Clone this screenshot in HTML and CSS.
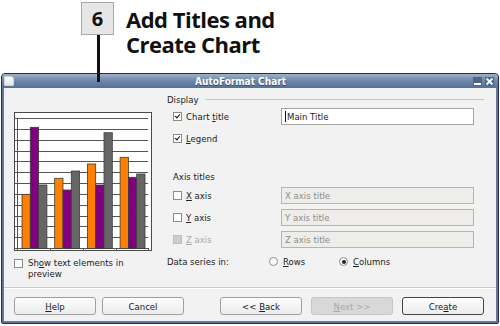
FILE: index.html
```html
<!DOCTYPE html>
<html lang="en">
<head>
    <meta charset="UTF-8">
    <meta name="viewport" content="width=device-width, initial-scale=1.0">
    <title>AutoFormat Chart</title>
    <link rel="stylesheet" href="styles.css">
</head>
<body>
    <!-- Step callout -->
    <div class="step">
        <div class="callout"><span>6</span></div>
        <h1 class="step-title"><span>Add Titles and</span><span>Create Chart</span></h1>
    </div>

    <!-- Dialog window -->
    <div class="window">
        <div class="titlebar">
            <span class="win-icon"></span>
            <span class="win-title">AutoFormat Chart</span>
            <span class="win-btn">
                <svg width="9" height="9" viewBox="0 0 9 9"><rect x="1" y="6" width="7" height="2" fill="#fff"/></svg>
            </span>
            <span class="win-btn">
                <svg width="9" height="9" viewBox="0 0 9 9"><path d="M1.5 1.5 L7.5 7.5 M7.5 1.5 L1.5 7.5" stroke="#fff" stroke-width="1.8"/></svg>
            </span>
        </div>

        <div class="content">
            <div class="main">
                <div class="preview-col">
                    <div class="preview">
                        <svg width="138" height="139" viewBox="0 0 138 139">
                            <rect x="0.5" y="0.5" width="137" height="138" fill="#fff" stroke="#4a4a4a"/>
                            <g stroke="#555" stroke-width="1">
                                <path d="M0 6.5H134 M0 17.5H134 M0 28.5H134 M0 39.5H134 M0 49.5H134 M0 60.5H134 M0 71.5H134 M0 82.5H134 M0 93.5H134 M0 104.5H134 M0 114.5H134 M0 125.5H134 M0 136.5H134"/>
                                <path d="M3.5 6V139 M36.5 136V139 M69.5 136V139 M102.5 136V139 M134.5 136V139"/>
                            </g>
                            <g stroke="#3c3c3c" stroke-width="0.8">
                                <rect x="8" y="82.3" width="8.3" height="54.2" fill="#ff7f00"/>
                                <rect x="16.3" y="15.3" width="8.3" height="121.2" fill="#800080"/>
                                <rect x="24.6" y="73" width="8.3" height="63.5" fill="#666"/>

                                <rect x="40.7" y="66.3" width="8.3" height="70.2" fill="#ff7f00"/>
                                <rect x="49" y="78" width="8.3" height="58.5" fill="#800080"/>
                                <rect x="57.3" y="59" width="8.3" height="77.5" fill="#666"/>

                                <rect x="73.4" y="52" width="8.3" height="84.5" fill="#ff7f00"/>
                                <rect x="81.7" y="73" width="8.3" height="63.5" fill="#800080"/>
                                <rect x="90" y="20.7" width="8.3" height="115.8" fill="#666"/>

                                <rect x="106.1" y="45.3" width="8.3" height="91.2" fill="#ff7f00"/>
                                <rect x="114.4" y="65.3" width="8.3" height="71.2" fill="#800080"/>
                                <rect x="122.7" y="62" width="8.3" height="74.5" fill="#666"/>
                            </g>
                        </svg>
                    </div>
                    <label class="check preview-check">
                        <span class="box"></span>
                        <span>Sh<u>o</u>w text elements in<br>preview</span>
                    </label>
                </div>

                <div class="options">
                    <div class="group-title"><span>Display</span></div>

                    <div class="row first">
                        <label class="check label"><span class="box checked"></span><span>Chart <u>t</u>itle</span></label>
                        <div class="field"><span class="caret"></span>Main Title</div>
                    </div>
                    <div class="row">
                        <label class="check label"><span class="box checked"></span><span><u>L</u>egend</span></label>
                    </div>

                    <div class="sub-title">Axis titles</div>

                    <div class="row axis">
                        <label class="check label"><span class="box"></span><span><u>X</u> axis</span></label>
                        <div class="field disabled">X axis title</div>
                    </div>
                    <div class="row">
                        <label class="check label"><span class="box"></span><span><u>Y</u> axis</span></label>
                        <div class="field disabled">Y axis title</div>
                    </div>
                    <div class="row">
                        <label class="check label off"><span class="box"></span><span><u>Z</u> axis</span></label>
                        <div class="field disabled">Z axis title</div>
                    </div>

                    <div class="row series">
                        <span class="series-label">Data series in:</span>
                        <label class="radio rows"><span class="dot"></span><span><u>R</u>ows</span></label>
                        <label class="radio"><span class="dot on"></span><span><u>C</u>olumns</span></label>
                    </div>
                </div>
            </div>

            <div class="separator"></div>

            <div class="buttons">
                <button class="btn"><u>H</u>elp</button>
                <button class="btn cancel">Cancel</button>
                <button class="btn back">&lt;&lt; <u>B</u>ack</button>
                <button class="btn" disabled><u>N</u>ext &gt;&gt;</button>
                <button class="btn default">Cre<u>a</u>te</button>
            </div>
        </div>
    </div>
</body>
</html>
```

FILE: styles.css
```css
/* Page */
body {
    margin: 0;
    width: 500px;
    height: 326px;
    overflow: hidden;
    background: #fff;
    font-family: "DejaVu Sans", sans-serif;
    font-stretch: condensed;
    font-size: 9.5px;
    color: #222;
}

/* Step callout above the dialog */
.step {
    display: flex;
    align-items: flex-start;
    height: 73px;
}

.callout {
    position: relative;
    margin: 2px 0 0 81px;
    width: 33px;
    height: 33px;
    box-sizing: border-box;
    border: 1px solid #a8a8a8;
    background: #e6e6e6;
    display: flex;
    align-items: center;
    justify-content: center;
    font: bold 20px "Open Sans", sans-serif;
    color: #111;
}

/* leader line drawn over the title bar */
.callout::after {
    content: "";
    position: absolute;
    left: 15px;
    top: 32px;
    width: 3px;
    height: 47px;
    background: #111;
    z-index: 2;
}

.step-title {
    margin: 9px 0 0 12px;
    display: flex;
    flex-direction: column;
    gap: 5px;
    font: bold 22px/20px "Open Sans", sans-serif;
    font-stretch: normal;
    letter-spacing: -0.5px;
    color: #111;
}

/* Window frame */
.window {
    margin-left: 1px;
    width: 498px;
    height: 251px;
    box-sizing: border-box;
    border: 1px solid #27303c;
    border-radius: 4px 4px 2px 2px;
    background: #627899;
    padding: 0 2px 2px;
    display: flex;
    flex-direction: column;
}

.titlebar {
    height: 14px;
    margin: 0 -2px;
    padding: 0 4px 0 2px;
    display: flex;
    align-items: center;
    background: linear-gradient(#a0b2ca, #7189ab 45%, #566f95);
    border-radius: 3px 3px 0 0;
}

.win-icon {
    width: 10px;
    height: 10px;
    box-sizing: border-box;
    border: 1px solid #cfd6e0;
    border-radius: 1px 3px 1px 1px;
    background: linear-gradient(#fff, #e4e4e4);
}

.win-title {
    flex: 1;
    text-align: center;
    padding-right: 3px;
    color: #fff;
    font-weight: bold;
    font-size: 10px;
    text-shadow: 0 1px 0 #3a4a63;
}

.win-btn {
    width: 9px;
    height: 9px;
    margin-left: 3px;
    background: #4f6589;
    display: flex;
}

/* Dialog body */
.content {
    flex: 1;
    background: #f2f2f2;
    display: flex;
    flex-direction: column;
}

.main {
    display: flex;
    padding: 4px 0 0 10px;
}

.preview-col {
    width: 138px;
    padding-top: 20px;
}

.preview svg {
    display: block;
}

/* Checkboxes and radios */
.check,
.radio {
    display: flex;
    align-items: center;
    gap: 4px;
}

.box {
    width: 9px;
    height: 9px;
    flex: none;
    box-sizing: border-box;
    border: 1px solid #8c8c8c;
    background: #fff;
    position: relative;
}

.box.checked::after {
    content: "";
    position: absolute;
    left: 2px;
    top: 0px;
    width: 2px;
    height: 4px;
    border: solid #111;
    border-width: 0 1.5px 1.5px 0;
    transform: rotate(40deg);
}

.off {
    color: #a8a8a8;
}

.off .box {
    background: #cdcdcd;
    border-color: #bdbdbd;
}

.preview-check {
    margin-top: 6px;
    align-items: flex-start;
    gap: 5px;
    line-height: 11px;
}

.preview-check .box {
    margin-top: 2px;
}

.dot {
    width: 9px;
    height: 9px;
    box-sizing: border-box;
    border: 1px solid #8c8c8c;
    border-radius: 50%;
    background: #fff;
    position: relative;
}

.dot.on::after {
    content: "";
    position: absolute;
    left: 1.5px;
    top: 1.5px;
    width: 4px;
    height: 4px;
    border-radius: 50%;
    background: #222;
}

/* Option panel */
.options {
    margin-left: 15px;
    width: 317px;
    display: flex;
    flex-direction: column;
}

.group-title {
    display: flex;
    align-items: center;
    gap: 6px;
    height: 14px;
}

.group-title::after {
    content: "";
    flex: 1;
    height: 1px;
    background: #c6c6c6;
}

.sub-title {
    margin-top: 23px;
    height: 14px;
    line-height: 14px;
    padding-left: 6px;
}

.row {
    display: flex;
    align-items: center;
    height: 17px;
    margin-top: 5px;
    padding-left: 6px;
}

.row.first {
    margin-top: 2px;
}

.row.axis {
    margin-top: 3px;
}

.row .label {
    width: 108px;
}

.field {
    width: 193px;
    height: 17px;
    box-sizing: border-box;
    border: 1px solid #a5a5a5;
    background: #fff;
    padding-left: 3px;
    line-height: 15px;
    display: flex;
    align-items: center;
}

.field.disabled {
    background: #eeede9;
    border-color: #b4b4b4;
    color: #8c8c8c;
}

.caret {
    width: 1px;
    height: 11px;
    background: #111;
    margin-right: 1px;
}

.row.series {
    padding-left: 0;
}

.series-label {
    width: 102px;
}

.radio {
    gap: 5px;
}

.radio.rows {
    width: 70px;
}

/* Buttons */
.separator {
    margin-top: 8px;
    height: 1px;
    background: #c8c8c8;
    border-bottom: 1px solid #fff;
}

.buttons {
    display: flex;
    gap: 9px;
    margin-top: 8px;
    padding: 0 12px 0 10px;
}

.btn {
    width: 82px;
    height: 18px;
    padding: 0;
    border: 1px solid #a0a0a0;
    border-radius: 3px;
    background: linear-gradient(#fdfdfd, #ececec);
    font: inherit;
    color: #222;
}

.btn.cancel {
    margin-left: -3px;
}

.btn.back {
    margin-left: auto;
}

.btn:disabled {
    background: #d8d8d8;
    border-color: #c6c6c6;
    color: #a9a9a9;
}

.btn.default {
    border-color: #444;
}
```
